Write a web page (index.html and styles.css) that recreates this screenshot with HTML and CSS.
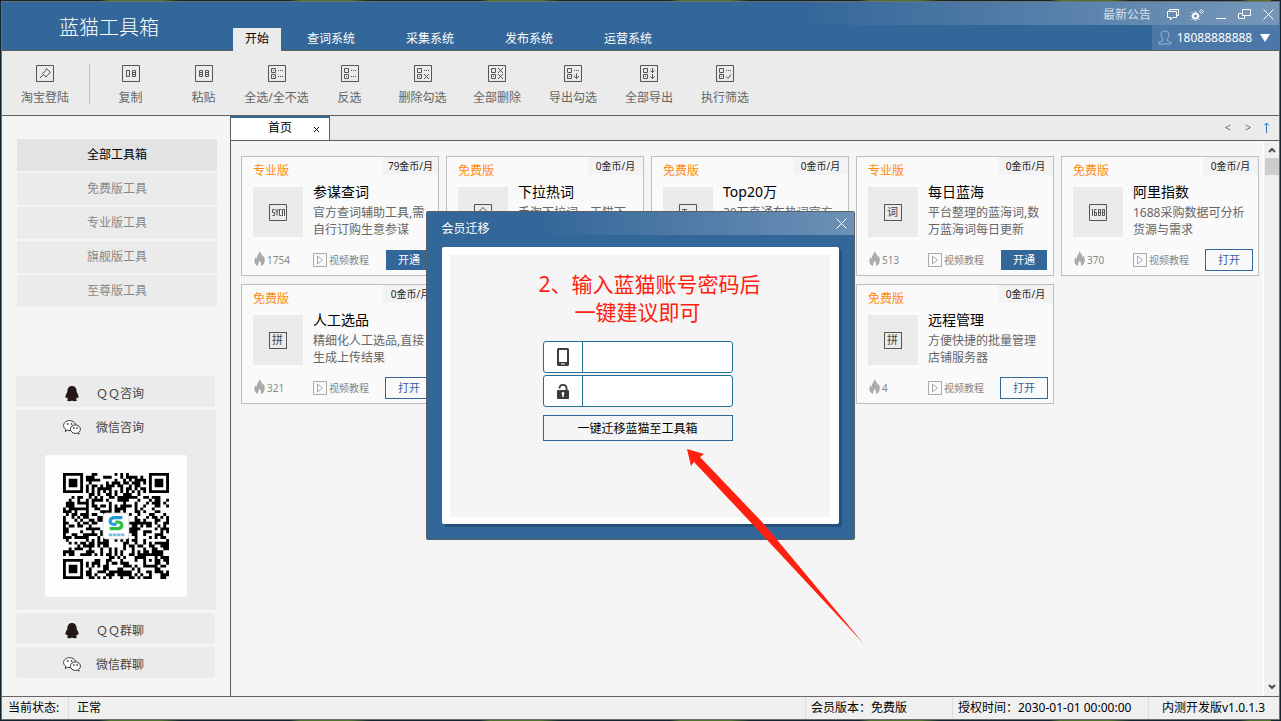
FILE: index.html
```html
<!DOCTYPE html>
<html lang="zh-CN">
<head>
<meta charset="utf-8">
<title>蓝猫工具箱</title>
<link rel="stylesheet" href="styles.css">
</head>
<body>
<svg class="defs" aria-hidden="true">
  <symbol id="frame" viewBox="0 0 18 17"><path d="M.5.5h17v16H.5z"/></symbol>
  <symbol id="boxes" viewBox="0 0 18 17"><path d="M.5.5h17v16H.5zM3.5 3.5h4v4h-4zM3.5 9.500h4v4h-4zM5 11.500h1"/></symbol>
  <symbol id="flame" viewBox="0 0 11 15"><path d="M5.500 0c.8 2.500 3.200 3.200 2.800 6 1-.4 1-1.500 1-1.500C11 7 11 9 10.500 11c-.5 2.200-2 3.500-3.500 4 .5-2.500-.3-4-1.500-5.200C5 11.500 3.700 12.500 4 15 1.500 14 .2 12 .5 9.500.6 8 1.200 7 1.800 6c0 1 .5 1.500 1 1.700C2.600 4.500 5 3.500 5.500 0z"/></symbol>
  <symbol id="play" viewBox="0 0 14 14"><path d="M.5.5h13v13H.5zM4.500 3v8l5-4z"/></symbol>
  <symbol id="qq" viewBox="0 0 14 16"><path d="M7 0c3 0 4.600 2 4.600 5 0 1 .3 1.500.9 2.500 1 1.600 1.300 3.500.7 4.500-.5.200-.9-.3-1.200-.8-.2.900-.6 1.500-1.100 2 .8.400 1.200.8 1 1.400-.3.800-3.900.9-4.900-.1-1 1-4.600.9-4.900.1-.2-.6.200-1 1-1.400-.5-.5-.9-1.100-1.100-2-.3.500-.7 1-1.200.8-.6-1-.3-2.900.7-4.500.6-1 .9-1.500.9-2.500C2.400 2 4 0 7 0z"/></symbol>
  <symbol id="wechat" viewBox="0 0 18 15"><path d="M7.500 10.500c-1 .1-2 0-3-.3L2.300 11.500l.5-2.200C1.400 8.300.6 7 .6 5.500c0-2.700 2.700-4.900 6-4.900 3 0 5.500 1.700 6 4M17.400 9.200c0 1.300-.7 2.400-1.700 3.200l.4 1.700-1.800-1c-.6.200-1.200.3-1.900.3-2.800 0-5-1.900-5-4.200s2.200-4.300 5-4.300 5 2 5 4.300z"/><circle cx="4.700" cy="4" r=".6"/><circle cx="8.600" cy="4" r=".6"/><circle cx="10.800" cy="8" r=".5"/><circle cx="14" cy="8" r=".5"/></symbol>
</svg>
<div class="desktop">
<div class="window">

  <header class="header">
    <h1 class="brand">蓝猫工具箱</h1>
    <nav class="nav">
      <a class="nav-item nav-item-active" href="#">开始</a>
      <a class="nav-item" href="#">查词系统</a>
      <a class="nav-item" href="#">采集系统</a>
      <a class="nav-item" href="#">发布系统</a>
      <a class="nav-item" href="#">运营系统</a>
    </nav>
    <div class="header-end">
      <div class="window-bar">
        <a class="notice" href="#">最新公告</a>
        <button class="win-btn" aria-label="消息"><svg width="12" height="12" viewBox="0 0 12 12"><path d="M2.500 2.500v-2h9v6h-2M.5 2.500h9v6h-4L3.500 11V8.500h-3z"/></svg></button>
        <button class="win-btn" aria-label="设置"><svg width="13" height="12" viewBox="0 0 13 12"><circle cx="4.500" cy="7" r="2.600" stroke-width="2"/><path d="M4.500 3v-1M4.500 11v1M.5 7h-1M1.500 4l-1-1M1.500 10l-1 1M7.500 10l1 1M8.500 7h1M8.500 2.500l2-2 2 2-2 2z"/></svg></button>
        <button class="win-btn" aria-label="最小化"><svg width="10" height="12" viewBox="0 0 10 12"><path d="M0 9.500h10"/></svg></button>
        <button class="win-btn" aria-label="还原"><svg width="13" height="12" viewBox="0 0 13 12"><path d="M4.500.5h8v6h-8zM4.500 4.500h-4v5h6v-3"/></svg></button>
        <button class="win-btn" aria-label="关闭"><svg width="11" height="12" viewBox="0 0 11 12"><path d="M.5.5l10 10M10.500.5l-10 10"/></svg></button>
      </div>
      <button class="account">
        <svg class="account-icon" width="14" height="15" viewBox="0 0 14 15"><path d="M5 9C3.500 8 3 6.500 3 4.700 3 2.300 4.500 1 7 1s4 1.300 4 3.700C11 6.500 10.500 8 9 9v1.500l4 1.700V14H1v-1.800l4-1.700z"/></svg>
        <span>18088888888</span>
        <svg width="10" height="8" viewBox="0 0 10 8"><path class="solid" d="M0 0h10L5 8z"/></svg>
      </button>
    </div>
  </header>

  <div class="toolbar">
    <button class="tool tool-login"><svg class="icon" width="18" height="17"><use href="#frame"/><path d="M4 13l4-4M10.500 3.500l4 4-2.500 2-2 2.500-3.500-3.500 2.500-2z"/></svg>淘宝登陆</button>
    <button class="tool"><svg class="icon" width="18" height="17"><use href="#frame"/><path d="M4.500 5.500h3v6h-3zM10.500 5.500h3v6h-3zM10.500 7.500h3M10.500 9.500h3"/></svg>复制</button>
    <button class="tool"><svg class="icon" width="18" height="17"><use href="#frame"/><path d="M4.500 5.500h3v6h-3zM10.500 5.500h3v6h-3zM4.500 7.500h3M4.500 9.500h3M10.500 7.500h3M10.500 9.500h3"/></svg>粘贴</button>
    <button class="tool"><svg class="icon" width="18" height="17"><use href="#boxes"/><path d="M5 5.500h1"/><path class="dots" d="M10 5.500h5M10 11.500h5"/></svg>全选/全不选</button>
    <button class="tool"><svg class="icon" width="18" height="17"><use href="#boxes"/><path class="dots" d="M10 5.500h5M10 11.500h5"/></svg>反选</button>
    <button class="tool"><svg class="icon" width="18" height="17"><use href="#boxes"/><path class="dots" d="M10 5.500h5"/><path d="M10 9l5 5M15 9l-5 5"/></svg>删除勾选</button>
    <button class="tool tool-wide"><svg class="icon" width="18" height="17"><use href="#boxes"/><path d="M10 3l5 5M15 3l-5 5M10 9l5 5M15 9l-5 5"/></svg>全部删除</button>
    <button class="tool tool-wide"><svg class="icon" width="18" height="17"><use href="#boxes"/><path class="dots" d="M10 5.500h5"/><path d="M12.500 8.500v5M10 11l2.500 2.500L15 11"/></svg>导出勾选</button>
    <button class="tool tool-wide"><svg class="icon" width="18" height="17"><use href="#boxes"/><path d="M12.500 3v5M10.500 5.500l2 2 2-2M12.500 9v5M10.500 11.500l2 2 2-2"/></svg>全部导出</button>
    <button class="tool tool-wide"><svg class="icon" width="18" height="17"><use href="#boxes"/><path class="dots" d="M10 5.500h5"/><path d="M10 11.500l2 2 3-4"/></svg>执行筛选</button>
  </div>

  <div class="main">
    <aside class="sidebar">
      <div class="menu">
        <button class="menu-item menu-item-active">全部工具箱</button>
        <button class="menu-item">免费版工具</button>
        <button class="menu-item">专业版工具</button>
        <button class="menu-item">旗舰版工具</button>
        <button class="menu-item">至尊版工具</button>
      </div>
      <div class="contacts">
        <button class="contact"><svg class="qq" width="14" height="16"><use href="#qq"/></svg>ＱＱ咨询</button>
        <div class="contact-open">
          <button class="contact"><svg class="wechat" width="18" height="15"><use href="#wechat"/></svg>微信咨询</button>
          <div class="qr-card">
            <svg class="qr" viewBox="0 0 37 37" role="img" aria-label="微信二维码">
              <path id="qr-modules"/>
              <rect class="qr-badge" x="14" y="14" width="9" height="9" rx="1"/>
              <path class="qr-blue" d="M20.700 15.600H18c-2 0-2 2.300-.3 2.300h1"/>
              <path class="qr-green" d="M16.300 19.400H19c2 0 2-2.300.3-2.300h-1"/>
              <path class="qr-caption" d="M16 21.600h5.500"/>
            </svg>
          </div>
        </div>
        <button class="contact"><svg class="qq" width="14" height="16"><use href="#qq"/></svg>ＱＱ群聊</button>
        <button class="contact"><svg class="wechat" width="18" height="15"><use href="#wechat"/></svg>微信群聊</button>
      </div>
    </aside>

    <section class="workspace">
      <div class="tabs">
        <div class="tab"><span class="tab-name">首页</span><button class="tab-close" aria-label="关闭首页"><svg width="7" height="7" viewBox="0 0 7 7"><path d="M1 1l5 5M6 1L1 6"/></svg></button></div>
        <div class="tab-arrows">
          <button aria-label="向左"><svg width="6" height="7" viewBox="0 0 6 7"><path d="M5.500 1l-5 2.500 5 2.500"/></svg></button>
          <button aria-label="向右"><svg width="6" height="7" viewBox="0 0 6 7"><path d="M.5 1l5 2.500-5 2.500"/></svg></button>
          <button class="tab-up" aria-label="收起"><svg width="7" height="11" viewBox="0 0 7 11"><path d="M3.500 11V1M1 3.500L3.500 1 6 3.500"/></svg></button>
        </div>
      </div>
      <div class="content">
        <div class="cards">
          <article class="card">
            <div class="card-top"><span class="tier">专业版</span><span class="price">79金币/月</span></div>
            <div class="card-body"><div class="thumb"><svg class="icon" width="18" height="17"><use href="#frame"/><path d="M5.500 5.500h-2v3h2v3h-2M7 5v2l1 1.500v3M9 5v2L8 8.500M12.500 5.500h-2v6h2M13.500 12V5.500h2V12"/></svg></div><div><h2 class="name">参谋查词</h2><p class="desc">官方查词辅助工具,需自行订购生意参谋</p></div></div>
            <div class="card-foot"><span class="heat"><svg width="11" height="15"><use href="#flame"/></svg>1754</span><a class="video" href="#"><svg width="14" height="14"><use href="#play"/></svg>视频教程</a><button class="btn btn-fill">开通</button></div>
          </article>
          <article class="card">
            <div class="card-top"><span class="tier">免费版</span><span class="price">0金币/月</span></div>
            <div class="card-body"><div class="thumb"><svg class="icon" width="18" height="17"><use href="#frame"/><path d="M4 8.500l5-5 5 5M6 7v6h6V7"/></svg></div><div><h2 class="name">下拉热词</h2><p class="desc">手淘下拉词、天猫下</p></div></div>
          </article>
          <article class="card">
            <div class="card-top"><span class="tier">免费版</span><span class="price">0金币/月</span></div>
            <div class="card-body"><div class="thumb"><svg class="icon" width="18" height="17"><use href="#frame"/><path d="M3 5.500h5M5.500 5.500v7M10 8.500h4"/></svg></div><div><h2 class="name">Top20万</h2><p class="desc">20万直通车热词官方</p></div></div>
          </article>
          <article class="card">
            <div class="card-top"><span class="tier">专业版</span><span class="price">0金币/月</span></div>
            <div class="card-body"><div class="thumb"><span class="glyph">词</span></div><div><h2 class="name">每日蓝海</h2><p class="desc">平台整理的蓝海词,数万蓝海词每日更新</p></div></div>
            <div class="card-foot"><span class="heat"><svg width="11" height="15"><use href="#flame"/></svg>513</span><a class="video" href="#"><svg width="14" height="14"><use href="#play"/></svg>视频教程</a><button class="btn btn-fill">开通</button></div>
          </article>
          <article class="card">
            <div class="card-top"><span class="tier">免费版</span><span class="price">0金币/月</span></div>
            <div class="card-body"><div class="thumb"><svg class="icon" width="18" height="17"><use href="#frame"/><path d="M2.500 5.500h1V12M7.500 5.500h-2v6h2v-3h-2M9.500 5.500h2v6h-2zM9.500 8.500h2M13.500 5.500h2v6h-2zM13.500 8.500h2"/></svg></div><div><h2 class="name">阿里指数</h2><p class="desc">1688采购数据可分析货源与需求</p></div></div>
            <div class="card-foot"><span class="heat"><svg width="11" height="15"><use href="#flame"/></svg>370</span><a class="video" href="#"><svg width="14" height="14"><use href="#play"/></svg>视频教程</a><button class="btn">打开</button></div>
          </article>
          <article class="card">
            <div class="card-top"><span class="tier">免费版</span><span class="price">0金币/月</span></div>
            <div class="card-body"><div class="thumb"><span class="glyph">拼</span></div><div><h2 class="name">人工选品</h2><p class="desc">精细化人工选品,直接生成上传结果</p></div></div>
            <div class="card-foot"><span class="heat"><svg width="11" height="15"><use href="#flame"/></svg>321</span><a class="video" href="#"><svg width="14" height="14"><use href="#play"/></svg>视频教程</a><button class="btn">打开</button></div>
          </article>
          <article class="card card-fourth">
            <div class="card-top"><span class="tier">免费版</span><span class="price">0金币/月</span></div>
            <div class="card-body"><div class="thumb"><span class="glyph">拼</span></div><div><h2 class="name">远程管理</h2><p class="desc">方便快捷的批量管理店铺服务器</p></div></div>
            <div class="card-foot"><span class="heat"><svg width="11" height="15"><use href="#flame"/></svg>4</span><a class="video" href="#"><svg width="14" height="14"><use href="#play"/></svg>视频教程</a><button class="btn">打开</button></div>
          </article>
        </div>
        <div class="scrollbar">
          <svg width="8" height="6" viewBox="0 0 8 6"><path d="M1 5l3-3 3 3"/></svg>
          <div class="scroll-thumb"></div>
          <svg class="scroll-down" width="8" height="6" viewBox="0 0 8 6"><path d="M1 1l3 3 3-3"/></svg>
        </div>
      </div>
    </section>
  </div>

  <footer class="status">
    <span class="status-label">当前状态:</span>
    <span class="status-state">正常</span>
    <span class="status-plan">会员版本：免费版</span>
    <span class="status-time">授权时间：2030-01-01 00:00:00</span>
    <span class="status-version">内测开发版v1.0.1.3</span>
  </footer>
</div>

<div class="dialog" role="dialog" aria-labelledby="dialog-title">
  <div class="dialog-bar">
    <h2 class="dialog-title" id="dialog-title">会员迁移</h2>
    <button class="dialog-close" aria-label="关闭"><svg width="11" height="11" viewBox="0 0 11 11"><path d="M.5.5l10 10M10.500.5l-10 10"/></svg></button>
  </div>
  <div class="panel">
    <form class="form">
      <div class="field">
        <label for="phone" aria-label="手机号"><svg width="12" height="18" viewBox="0 0 12 18"><path fill-rule="evenodd" d="M1.500 0h9Q12 0 12 1.500v15q0 1.500-1.500 1.500h-9Q0 18 0 16.500v-15Q0 0 1.500 0zM2 2v12h8V2zm2 13.500v1h4v-1z"/></svg></label>
        <input id="phone" type="text">
      </div>
      <div class="field">
        <label for="password" aria-label="密码"><svg width="12" height="15" viewBox="0 0 12 15"><path fill-rule="evenodd" d="M1.500 4.500C1.500 2 3 0 6 0s4.500 2 4.500 4.500V6q1.500 0 1.500 1v7q0 1-1 1H1q-1 0-1-1V7q0-1 1-1h7.700V4.500C8.700 3 7.800 1.800 6 1.800S3.300 3 3.300 4.500zM6 8a1.500 1.500 0 0 0-.8 2.700V13h1.600v-2.300A1.500 1.500 0 0 0 6 8z"/></svg></label>
        <input id="password" type="password">
      </div>
      <button class="submit" type="button">一键迁移蓝猫至工具箱</button>
    </form>
  </div>
  <p class="hint">2、输入蓝猫账号密码后<span class="hint-next">一键建议即可</span></p>
  <svg class="arrow" width="177" height="196" viewBox="0 0 177 196"><path d="M0 0l17 5-4 3 63 66 101 121L69 79 7 13l-3 4z"/></svg>
</div>
</div>
<script src="qr.js"></script>
</body>
</html>
```

FILE: styles.css
```css
* { box-sizing: border-box; }
body {
  margin: 0;
  font-family: "Noto Sans", "Noto Sans CJK SC", sans-serif;
  font-size: 12px;
  line-height: 16px;
  color: #000;
}
h1, h2, p { margin: 0; font-weight: 400; }
a { color: inherit; text-decoration: none; }
button {
  display: flex;
  align-items: center;
  justify-content: center;
  margin: 0;
  padding: 0;
  border: 0;
  background: none;
  font: inherit;
  color: inherit;
  white-space: nowrap;
}
svg { display: block; flex: none; fill: none; stroke: currentColor; }
.defs { position: absolute; width: 0; height: 0; }

.desktop {
  position: relative;
  display: flex;
  min-height: 100vh;
  padding: 1px;
  background: repeating-linear-gradient(90deg, #12262f 0 100px, #4f7430 110px 160px, #12262f 180px 190px) #12262f;
  background-size: calc(100% - 10px) 100%;
  background-repeat: no-repeat;
}
.window {
  flex: 1;
  display: flex;
  flex-direction: column;
  min-width: 0;
  border: 1px solid #6e6e6e;
  background: #f5f5f5;
}

/* Header */
.header {
  display: flex;
  height: 49px;
  border-bottom: 1px solid #5f5f5f;
  background: #336699;
  color: #fff;
}
.brand {
  width: 231px;
  padding: 11px 0 0 57px;
  font-size: 20px;
  font-weight: 300;
  line-height: 30px;
}
.nav { display: flex; align-items: flex-end; gap: 1px; margin-bottom: -1px; }
.nav-item { padding: 3px 25px 4px; }
.nav-item-active {
  padding: 3px 12px 4px;
  background: #ebebeb;
  color: #000;
}
.header-end { flex: 1; display: flex; flex-direction: column; align-items: flex-end; }
.window-bar {
  display: flex;
  align-items: center;
  align-self: stretch;
  justify-content: flex-end;
  gap: 12px;
  height: 23px;
  padding: 2px 5px 0 0;
  background: linear-gradient(90deg, #336699 20%, #7697b9);
}
.notice { margin-right: 4px; color: #d6e0eb; }
.win-btn svg { overflow: visible; }
.account {
  gap: 5px;
  width: 127px;
  height: 25px;
  padding-right: 3px;
  background: #4b78a8;
}
.account span { margin-right: 3px; }
.account-icon { color: #9db6d0; }
.solid { fill: currentColor; stroke: none; }

/* Toolbar */
.toolbar {
  display: flex;
  height: 65px;
  border-bottom: 1px solid #5f5f5f;
  background: #ebebeb;
  color: #666;
}
.tool {
  flex-direction: column;
  justify-content: flex-start;
  gap: 8px;
  width: 73px;
  padding-top: 14px;
}
.tool-wide { width: 76px; }
.tool-login { position: relative; width: 86px; margin-right: 6px; }
.tool-login::after {
  content: "";
  position: absolute;
  top: 13px;
  right: -2px;
  width: 1px;
  height: 40px;
  background: #bdbdbd;
}
.icon { color: #555; }
.dots { stroke-dasharray: 1 1; }

/* Sidebar */
.main { flex: 1; display: flex; min-height: 0; }
.sidebar {
  display: flex;
  flex-direction: column;
  justify-content: space-between;
  width: 229px;
  padding: 23px 13px 18px 14px;
  border-right: 1px solid #5f5f5f;
}
.menu { display: flex; flex-direction: column; gap: 2px; padding-left: 1px; }
.menu-item { height: 32px; background: #ebebeb; color: #888; }
.menu-item-active { background: #e3e3e3; color: #000; }
.contacts { display: flex; flex-direction: column; gap: 3px; }
.contact {
  justify-content: flex-start;
  gap: 15px;
  width: 199px;
  height: 31px;
  padding: 4px 0 0 47px;
  border-radius: 2px;
  background: #ebebeb;
  color: #444;
}
.qq { margin: 0 2px; fill: #231815; stroke: none; }
.wechat { color: #333; fill: #fff; }
.contact-open { width: 200px; padding-bottom: 13px; background: #ebebeb; }
.qr-card {
  width: 142px;
  margin: 14px auto 0 29px;
  padding: 18px;
  border-radius: 2px;
  background: #fcfdff;
}
.qr { width: 106px; height: 106px; fill: #000; stroke: none; }
.qr-badge { fill: #fff; stroke: #ddd; stroke-width: 0.3; }
.qr-blue { fill: none; stroke: #1e9bdc; stroke-width: 1.1; }
.qr-green { fill: none; stroke: #2cc03c; stroke-width: 1.1; }
.qr-caption { stroke: #6fc0e6; stroke-width: 1; stroke-dasharray: 1.2 0.2; }

/* Workspace */
.workspace { flex: 1; display: flex; flex-direction: column; min-width: 0; }
.tabs {
  display: flex;
  justify-content: space-between;
  height: 25px;
  border-bottom: 1px solid #5f5f5f;
  background: #ebebeb;
}
.tab {
  display: flex;
  align-items: center;
  justify-content: space-between;
  width: 99px;
  padding: 0 9px 2px 37px;
  border-top: 2px solid #336699;
  border-right: 1px solid #5f5f5f;
  background: #fff;
}
.tab-close { padding-top: 2px; }
.tab-arrows { display: flex; align-items: center; gap: 14px; padding: 0 9px 2px 0; color: #777; }
.tab-up { margin-left: -2px; color: #2f78b8; }
.content { flex: 1; display: flex; justify-content: space-between; }
.cards {
  display: grid;
  grid-template-columns: repeat(auto-fill, 198px);
  flex: 1;
  align-content: start;
  gap: 8px 7px;
  padding: 15px 4px 15px 10px;
}
.card {
  display: flex;
  flex-direction: column;
  min-height: 120px;
  border: 1px solid #bfbfbf;
  background: #fafafa;
}
.card-fourth { grid-column: 4; }
.card-top { display: flex; justify-content: space-between; height: 30px; padding-left: 11px; }
.tier { padding-top: 6px; color: #ff8a0c; }
.price {
  width: 55px;
  height: 18px;
  padding-top: 1px;
  background: #f3f3f3;
  font-size: 10px;
  text-align: center;
  color: #222;
}
.card-body { display: flex; gap: 10px; padding: 0 8px 0 11px; }
.thumb {
  display: flex;
  flex: none;
  align-items: center;
  justify-content: center;
  width: 50px;
  height: 50px;
  padding-right: 1px;
  background: #ebebeb;
}
.glyph {
  display: flex;
  align-items: center;
  justify-content: center;
  width: 18px;
  height: 17px;
  border: 1px solid #555;
  font-size: 11px;
  color: #444;
}
.name { margin-top: -5px; font-size: 14px; line-height: 20px; }
.desc { margin-top: 2px; line-height: 17px; color: #666; }
.card-foot {
  display: flex;
  align-items: center;
  height: 22px;
  margin-top: 11px;
  padding: 0 5px 0 12px;
  font-size: 10px;
  color: #888;
}
.heat { display: flex; align-items: center; gap: 2px; width: 59px; }
.heat svg { margin-bottom: 3px; fill: #aaa; stroke: none; }
.video { display: flex; align-items: center; gap: 2px; }
.video svg { color: #aaa; }
.btn {
  width: 48px;
  height: 22px;
  margin-left: auto;
  border: 1px solid #336699;
  font-size: 11px;
  color: #336699;
}
.btn-fill { width: 46px; height: 20px; margin-right: 1px; background: #336699; color: #fff; }
.scrollbar {
  display: flex;
  flex-direction: column;
  align-items: center;
  width: 16px;
  padding: 6px 0;
  border-left: 1px solid #fff;
  background: #f0f0f0;
  color: #505050;
}
.scrollbar svg { stroke-width: 2; }
.scroll-thumb { width: 14px; height: 17px; margin-top: 5px; background: #cdcdcd; }
.scroll-down { margin-top: auto; }

/* Status bar */
.status {
  display: flex;
  height: 23px;
  border-top: 1px solid #6a6466;
  background: #f0f0f0;
  line-height: 21px;
  white-space: nowrap;
}
.status span { padding-left: 6px; }
.status span + span { border-left: 1px solid #dcdcdc; }
.status .status-label { width: 66px; }
.status .status-state { flex: 1; padding-left: 8px; }
.status .status-plan { width: 147px; padding-left: 5px; }
.status .status-time { width: 196px; padding-left: 5px; }
.status .status-version { width: 131px; padding-left: 13px; }

/* Dialog */
.dialog {
  position: absolute;
  top: 211px;
  left: calc(50% - 215px);
  width: 429px;
  padding-bottom: 15px;
  border: 1px solid #5a6068;
  border-radius: 2px;
  background: #336699;
}
.dialog-bar {
  display: flex;
  justify-content: space-between;
  height: 23px;
  padding: 0 7px 0 15px;
  background: linear-gradient(90deg, #336699 25%, #6d91b6);
  color: #fff;
}
.dialog-title { padding-top: 9px; font-size: 12px; }
.panel {
  margin: 12px 15px 0;
  padding: 8px 9px 7px 8px;
  border-radius: 2px;
  background: #fff;
  box-shadow: 3px 3px 0 #25507c;
}
.form {
  display: flex;
  flex-direction: column;
  align-items: center;
  gap: 2px;
  padding: 86px 4px 76px 0;
  background: #f5f5f5;
}
.field {
  display: flex;
  width: 190px;
  height: 32px;
  border: 1px solid #22709a;
  border-radius: 3px;
  background: #fff;
}
.field label {
  display: flex;
  align-items: center;
  justify-content: center;
  width: 39px;
  border-right: 1px solid #22709a;
}
.field svg { fill: #3c3c3c; stroke: none; }
.field input {
  flex: 1;
  min-width: 0;
  padding: 0 8px;
  border: 0;
  outline: 0;
  background: none;
  font: inherit;
}
.submit { width: 190px; height: 26px; margin-top: 6px; padding-top: 2px; border: 1px solid #336699; }
.hint {
  position: absolute;
  top: 58px;
  left: 112px;
  font-size: 21px;
  line-height: 28px;
  color: #ff2010;
  white-space: nowrap;
}
.hint-next { display: block; padding-left: 36px; }
.arrow { position: absolute; top: 237px; left: 260px; fill: #ff2010; stroke: none; }
```

FILE: qr.js
```js
// Builds the module path of the 37 x 37 contact code.
const size = 37;
const finders = [[0, 0], [30, 0], [0, 30]];
let seed = 20301;

function noise() {
  seed = (seed * 1103515245 + 12345) % 2147483648;
  return seed / 2147483648 < 0.5;
}

function ring(x, y, radius) {
  return Math.max(Math.abs(x), Math.abs(y)) === radius;
}

function moduleAt(x, y) {
  const dark = noise();
  for (const [fx, fy] of finders) {
    const dx = x - fx - 3;
    const dy = y - fy - 3;
    if (Math.max(Math.abs(dx), Math.abs(dy)) <= 4) {
      return !ring(dx, dy, 4) && !ring(dx, dy, 2);
    }
  }
  const ax = x - 30;
  const ay = y - 30;
  if (Math.max(Math.abs(ax), Math.abs(ay)) <= 2) return !ring(ax, ay, 1);
  if (x === 6 || y === 6) return (x + y) % 2 === 0;
  return dark;
}

let path = "";
for (let y = 0; y < size; y++) {
  for (let x = 0; x < size; x++) {
    if (moduleAt(x, y)) path += `M${x} ${y}h1v1h-1z`;
  }
}
document.getElementById("qr-modules").setAttribute("d", path);
```
